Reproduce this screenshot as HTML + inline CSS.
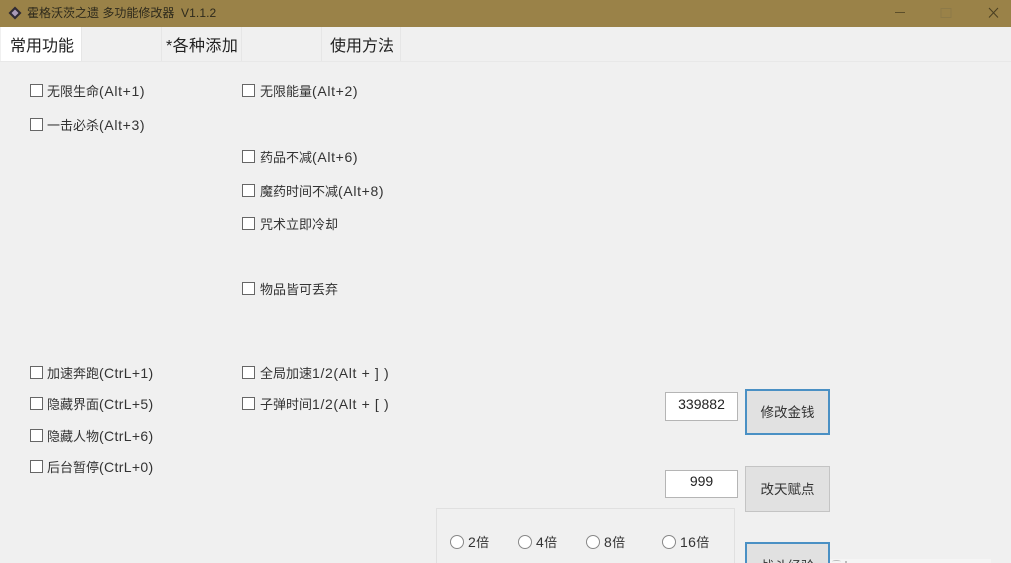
<!DOCTYPE html>
<html lang="zh">
<head>
<meta charset="utf-8">
<style>
html,body{margin:0;padding:0;width:1011px;height:563px;overflow:hidden;background:#f0f0f0;}
#w{position:absolute;left:0;top:0;width:1011px;height:563px;overflow:hidden;background:#f0f0f0;font-family:"Liberation Sans","Noto Sans CJK SC",sans-serif;color:#2a2a2a;filter:blur(.35px);}
.a{position:absolute;white-space:nowrap;}
#bar{left:0;top:0;width:1011px;height:27px;background:#9a8248;}
#title{left:27px;top:5px;font-size:12px;line-height:16px;color:#2e2a1c;}
#title b{font-weight:normal;font-size:12px;letter-spacing:.1px;}
#tabline{left:0;top:61px;width:1011px;height:1px;background:#e8e8e8;}
.tab{top:27px;height:34px;font-size:16px;line-height:40px;color:#222;border-right:1px solid #e6e6e6;box-sizing:border-box;}
.cb{width:13px;height:13px;border:1px solid #666;background:#fff;box-sizing:border-box;}
.l{font-size:13px;line-height:16px;color:#333;}
.l b{font-weight:normal;font-size:14px;letter-spacing:.65px;}
.l b.c{letter-spacing:.35px;}
.rb{width:14px;height:14px;border:1px solid #888;border-radius:50%;background:#fff;box-sizing:border-box;}
.inp{background:#fff;border:1px solid #b5b5b5;box-sizing:border-box;text-align:center;font-size:14px;color:#222;}
.btn{background:#e1e1e1;box-sizing:border-box;text-align:center;font-size:13.500px;color:#333;}
</style>
</head>
<body>
<div id="w">
<div class="a" id="bar"></div>
<svg class="a" style="left:7px;top:5px" width="16" height="16" viewBox="0 0 16 16"><path d="M8 1.500L14.500 8 8 14.500 1.500 8z" fill="#2f2a33"/><path d="M8 4.500L11.500 8 8 11.500 4.500 8z" fill="#a99ab8"/></svg>
<div class="a" id="title">霍格沃茨之遗 多功能修改器&nbsp; <b>V1.1.2</b></div>
<svg class="a" style="left:860px;top:0" width="151" height="27" viewBox="0 0 151 27" fill="none"><path d="M35 12.500H45" stroke="#5c4e2a" stroke-width="1"/><rect x="81" y="8.500" width="10" height="9" stroke="#8d7a48"/><path d="M129 8L138 17.500M138 8L129 17.500" stroke="#4a3f22" stroke-width="1"/></svg>

<div class="a" style="left:1px;top:27px;width:81px;height:34px;background:#fff;"></div>
<div class="a" id="tabline"></div>
<div class="a tab" style="left:10px;width:72px;">常用功能</div>
<div class="a tab" style="left:82px;width:80px;"></div>
<div class="a tab" style="left:166px;width:76px;letter-spacing:.4px;">*各种添加</div>
<div class="a tab" style="left:242px;width:80px;"></div>
<div class="a tab" style="left:330px;width:71px;">使用方法</div>

<div class="a cb" style="left:30px;top:84px"></div><div class="a l" style="left:47px;top:83px">无限生命<b>(Alt+1)</b></div>
<div class="a cb" style="left:30px;top:118px"></div><div class="a l" style="left:47px;top:117px">一击必杀<b>(Alt+3)</b></div>
<div class="a cb" style="left:30px;top:366px"></div><div class="a l" style="left:47px;top:365px">加速奔跑<b class="c">(CtrL+1)</b></div>
<div class="a cb" style="left:30px;top:397px"></div><div class="a l" style="left:47px;top:396px">隐藏界面<b class="c">(CtrL+5)</b></div>
<div class="a cb" style="left:30px;top:429px"></div><div class="a l" style="left:47px;top:428px">隐藏人物<b class="c">(CtrL+6)</b></div>
<div class="a cb" style="left:30px;top:460px"></div><div class="a l" style="left:47px;top:459px">后台暂停<b class="c">(CtrL+0)</b></div>

<div class="a cb" style="left:242px;top:84px"></div><div class="a l" style="left:260px;top:83px">无限能量<b>(Alt+2)</b></div>
<div class="a cb" style="left:242px;top:150px"></div><div class="a l" style="left:260px;top:149px">药品不减<b>(Alt+6)</b></div>
<div class="a cb" style="left:242px;top:184px"></div><div class="a l" style="left:260px;top:183px">魔药时间不减<b>(Alt+8)</b></div>
<div class="a cb" style="left:242px;top:217px"></div><div class="a l" style="left:260px;top:217px">咒术立即冷却</div>
<div class="a cb" style="left:242px;top:282px"></div><div class="a l" style="left:260px;top:282px">物品皆可丢弃</div>
<div class="a cb" style="left:242px;top:366px"></div><div class="a l" style="left:260px;top:365px">全局加速<b>1/2(Alt + ] )</b></div>
<div class="a cb" style="left:242px;top:397px"></div><div class="a l" style="left:260px;top:396px">子弹时间<b>1/2(Alt + [ )</b></div>

<div class="a inp" style="left:665px;top:392px;width:73px;height:29px;line-height:22px;">339882</div>
<div class="a btn" style="left:745px;top:389px;width:85px;height:46px;border:2px solid #4a90c4;line-height:44px;">修改金钱</div>
<div class="a inp" style="left:665px;top:470px;width:73px;height:28px;line-height:20px;">999</div>
<div class="a btn" style="left:745px;top:466px;width:85px;height:46px;border:1px solid #c4c4c4;line-height:46px;">改天赋点</div>

<div class="a" style="left:436px;top:508px;width:299px;height:60px;border:1px solid #e0e0e0;box-sizing:border-box;"></div>
<div class="a rb" style="left:450px;top:535px"></div><div class="a l" style="left:468px;top:534px"><b class="c">2</b>倍</div>
<div class="a rb" style="left:518px;top:535px"></div><div class="a l" style="left:536px;top:534px"><b class="c">4</b>倍</div>
<div class="a rb" style="left:586px;top:535px"></div><div class="a l" style="left:604px;top:534px"><b class="c">8</b>倍</div>
<div class="a rb" style="left:662px;top:535px"></div><div class="a l" style="left:680px;top:534px"><b class="c">16</b>倍</div>

<div class="a btn" style="left:745px;top:542px;width:85px;height:46px;border:2px solid #4a90c4;line-height:46px;">战斗经验</div>
<div class="a" style="left:830px;top:559px;width:161px;height:4px;background:#f5f5f5;"></div>
<div class="a" style="left:832px;top:560px;width:9px;height:3px;border-top:1px solid #bbb;border-radius:50% 50% 0 0;box-sizing:border-box;"></div>
<div class="a" style="left:845px;top:561px;width:2px;height:2px;background:#bbb;"></div>
</div>
</body>
</html>
